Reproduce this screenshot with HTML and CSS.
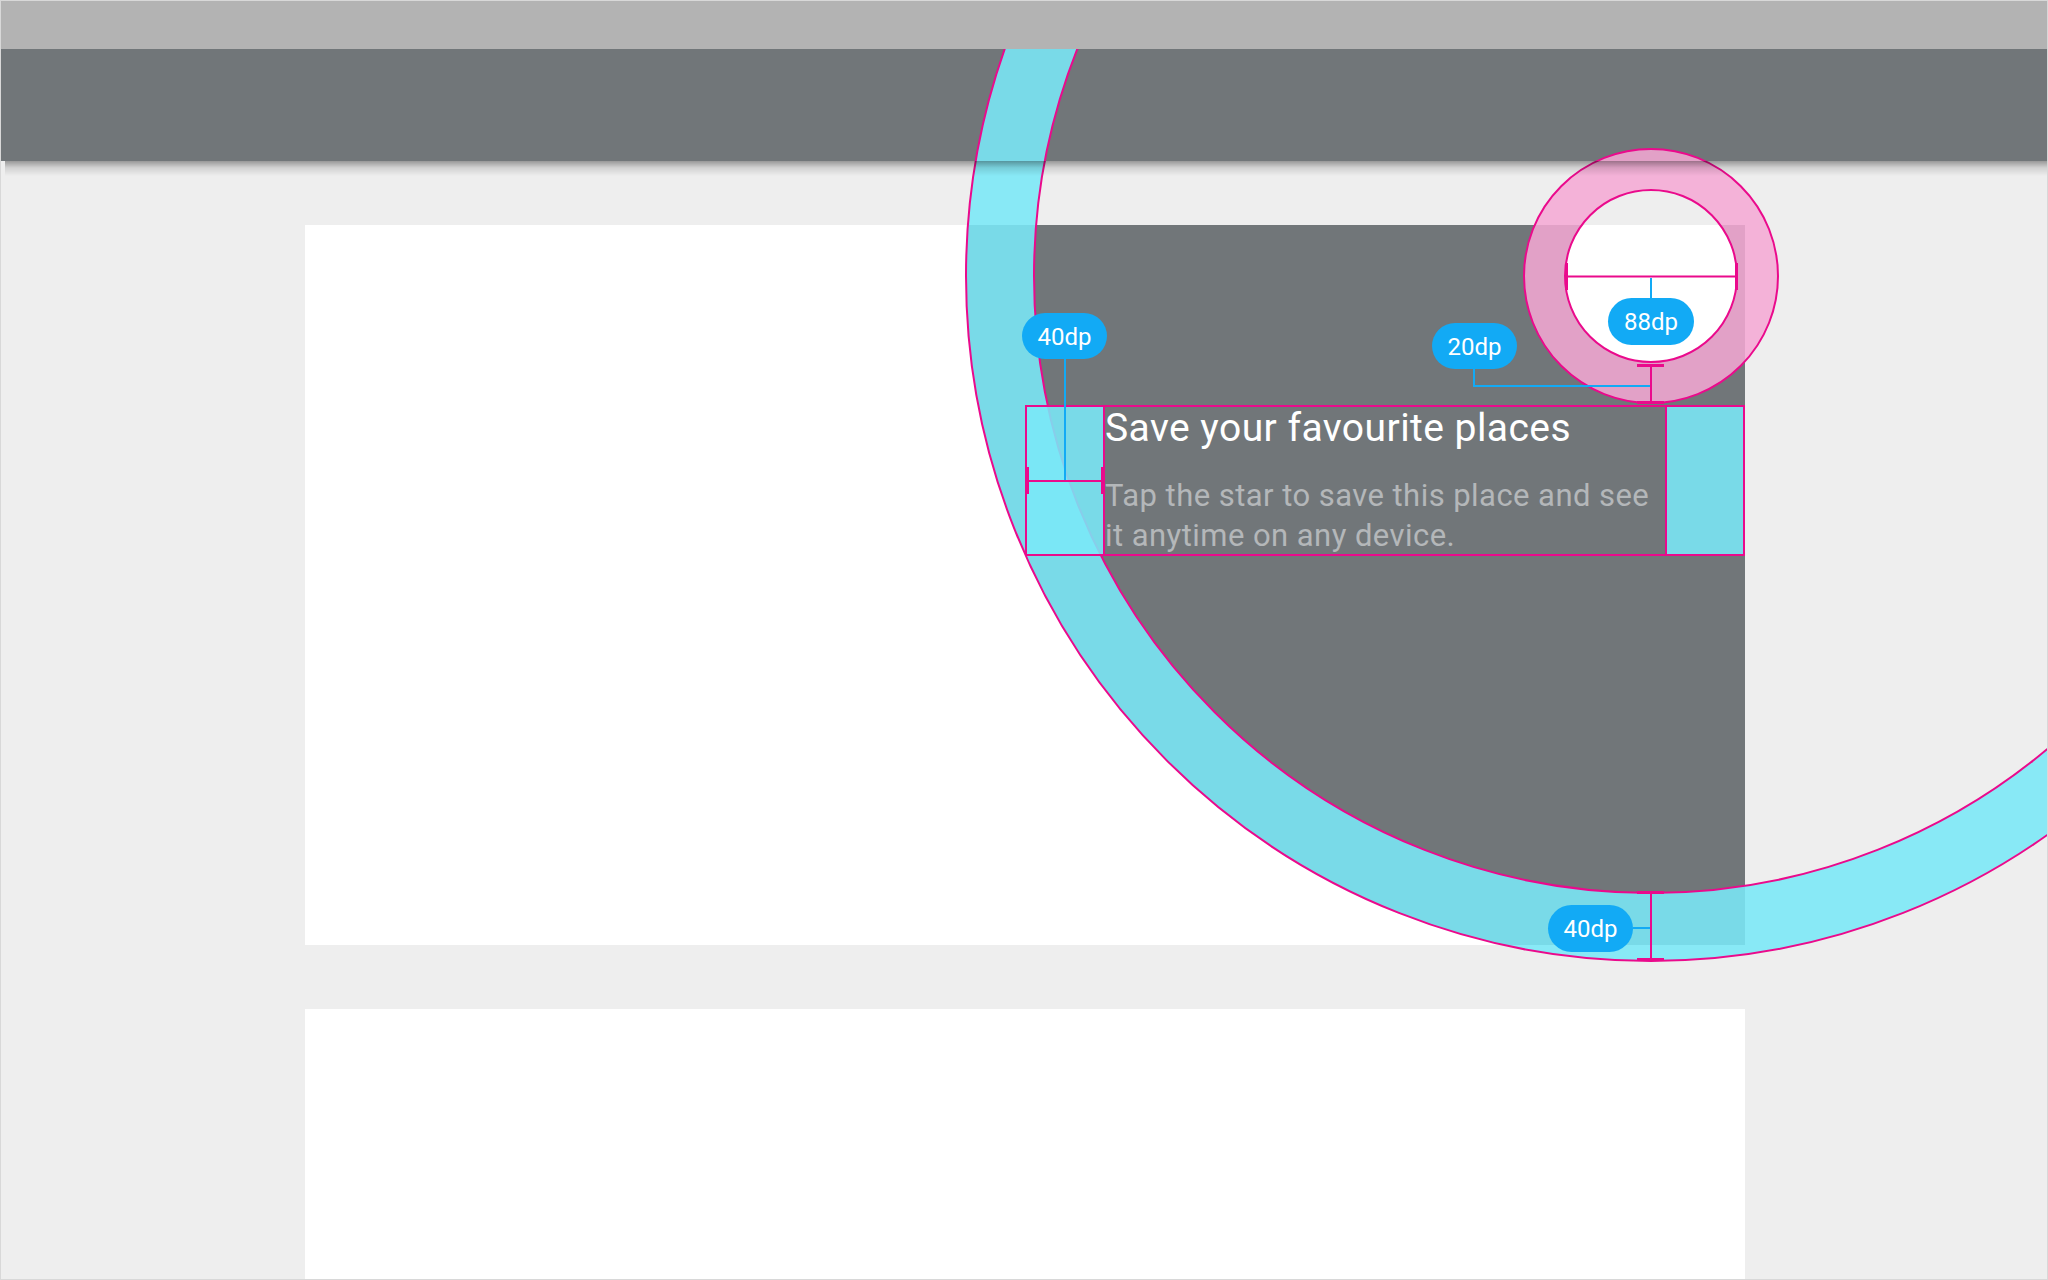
FILE: index.html
```html
<!DOCTYPE html>
<html>
<head>
  <meta charset="utf-8">
  <title>Feature discovery spec</title>
  <link rel="stylesheet" href="styles.css">
</head>
<body>
  <div class="screen">
    <div class="statusbar"></div>
    <div class="appbar"></div>
    <div class="content">
      <div class="card card-top"></div>
      <div class="card card-bottom"></div>
    </div>

    <!-- feature discovery overlay + redlines -->
    <div class="annot">
      <svg class="shapes" width="2048" height="1280" viewBox="0 0 2048 1280">
        <defs>
          <clipPath id="card-clip"><rect x="305" y="225" width="1440" height="720"/></clipPath>
          <clipPath id="below-status"><rect x="0" y="49" width="2048" height="1231"/></clipPath>
        </defs>
        <!-- outer circle fill, only over the card -->
        <path clip-path="url(#card-clip)" fill="#717679" fill-rule="evenodd"
          d="M966,276 a685,685 0 1,0 1370,0 a685,685 0 1,0 -1370,0 Z M1565,276 a86,86 0 1,0 172,0 a86,86 0 1,0 -172,0 Z"/>
        <g clip-path="url(#below-status)">
          <path class="ring" fill-rule="evenodd"
            d="M966,276 a685,685 0 1,0 1370,0 a685,685 0 1,0 -1370,0 Z M1034,276 a617,617 0 1,0 1234,0 a617,617 0 1,0 -1234,0 Z"/>
          <circle class="edge" cx="1651" cy="276" r="685"/>
          <circle class="edge" cx="1651" cy="276" r="617"/>
        </g>
        <!-- target -->
        <path class="halo" fill-rule="evenodd"
          d="M1524,276 a127,127 0 1,0 254,0 a127,127 0 1,0 -254,0 Z M1565,276 a86,86 0 1,0 172,0 a86,86 0 1,0 -172,0 Z"/>
        <circle class="edge" cx="1651" cy="276" r="127"/>
        <circle class="edge" cx="1651" cy="276" r="86"/>
      </svg>

      <div class="tip">
        <div class="pad pad-left"></div>
        <div class="tip-text">
          <div class="tip-title">Save your favourite places</div>
          <div class="tip-body">Tap the star to save this place and see it anytime on any device.</div>
        </div>
        <div class="pad pad-right"></div>
      </div>

      <svg class="marks" width="2048" height="1280" viewBox="0 0 2048 1280">
        <!-- blue leaders -->
        <path class="leader" d="M1651,278 V298"/>
        <path class="leader" d="M1474,369 V386 H1651"/>
        <path class="leader" d="M1065,359 V481"/>
        <path class="leader" d="M1633,928 H1651"/>

        <!-- redlines -->
        <path class="rule" d="M1566,276.5 H1737"/>
        <rect class="tick" x="1565" y="263" width="3" height="27"/>
        <rect class="tick" x="1735" y="263" width="3" height="27"/>

        <path class="rule" d="M1651,365 V403"/>
        <rect class="tick" x="1637" y="364" width="27" height="3"/>
        <rect class="tick" x="1637" y="401" width="27" height="3"/>

        <path class="rule" d="M1651,892 V960"/>
        <rect class="tick" x="1637" y="891" width="27" height="3"/>
        <rect class="tick" x="1637" y="958" width="27" height="3"/>

        <path class="rule" d="M1027,481 H1103"/>
        <rect class="tick" x="1026" y="467" width="3" height="27"/>
        <rect class="tick" x="1101" y="467" width="3" height="27"/>

        <!-- labels -->
        <rect class="pill" x="1608" y="298" width="86" height="47" rx="23.5"/>
        <text class="pill-text" x="1651" y="321.5" dy="0.36em">88dp</text>

        <rect class="pill" x="1432" y="323" width="85" height="46" rx="23"/>
        <text class="pill-text" x="1474.5" y="346" dy="0.36em">20dp</text>

        <rect class="pill" x="1022" y="313" width="85" height="46" rx="23"/>
        <text class="pill-text" x="1064.5" y="336" dy="0.36em">40dp</text>

        <rect class="pill" x="1548" y="905" width="85" height="47" rx="23.5"/>
        <text class="pill-text" x="1590.5" y="928.5" dy="0.36em">40dp</text>
      </svg>
    </div>
  </div>
</body>
</html>
```

FILE: styles.css
```css
html, body { margin:0; padding:0 }
body { font-family:Roboto, "Noto Sans", sans-serif; background:#eeeeee }

.screen {
  position:relative;
  width:2048px; height:1280px;
  box-sizing:border-box;
  border:1px solid #d8d8d8;
  background:#eeeeee;
  overflow:hidden
}
.statusbar { height:48px; background:#b3b3b3 }
.appbar { position:relative; height:112px; background:#717679 }
.appbar:after {
  content:"";
  position:absolute; left:4px; right:0; top:100%;
  height:15px;
  background:linear-gradient(rgba(0,0,0,.36), rgba(0,0,0,.12) 45%, rgba(0,0,0,0));
  z-index:5
}

.content { padding:64px 0 0 304px }
.card { width:1440px; background:#fff }
.card-top { height:720px }
.card-bottom { height:400px; margin-top:64px }

/* overlay layer, page coordinates */
.annot { position:absolute; left:-1px; top:-1px; width:2048px; height:1280px; z-index:2 }
.shapes, .marks { position:absolute; left:0; top:0 }
.marks { z-index:3 }

.ring { fill:rgba(122,232,247,.88) }
.halo { fill:rgba(244,168,212,.86) }
.edge { fill:none; stroke:#ea0a8c; stroke-width:2 }

.tip {
  position:absolute; left:1025px; top:405px;
  width:720px; height:151px;
  box-sizing:border-box;
  border:2px solid #ea0a8c;
  display:flex;
  z-index:2
}
.pad { width:76px; background:rgba(122,232,247,.88) }
.pad-left { border-right:2px solid #ea0a8c }
.pad-right { border-left:2px solid #ea0a8c }
.tip-text { flex:1; padding-top:1px; min-width:0 }
.tip-title { font-size:39px; line-height:40px; letter-spacing:0.45px; color:#fff }
.tip-body { margin-top:28px; font-size:31px; line-height:40px; letter-spacing:0.45px; color:#b4b7b9 }

.leader { fill:none; stroke:#12aaf5; stroke-width:2 }
.rule { fill:none; stroke:#ea0a8c; stroke-width:2 }
.tick { fill:#ea0a8c }
.pill { fill:#12aaf5 }
.pill-text { fill:#fff; font-family:Roboto, sans-serif; font-size:24px; text-anchor:middle }
```
